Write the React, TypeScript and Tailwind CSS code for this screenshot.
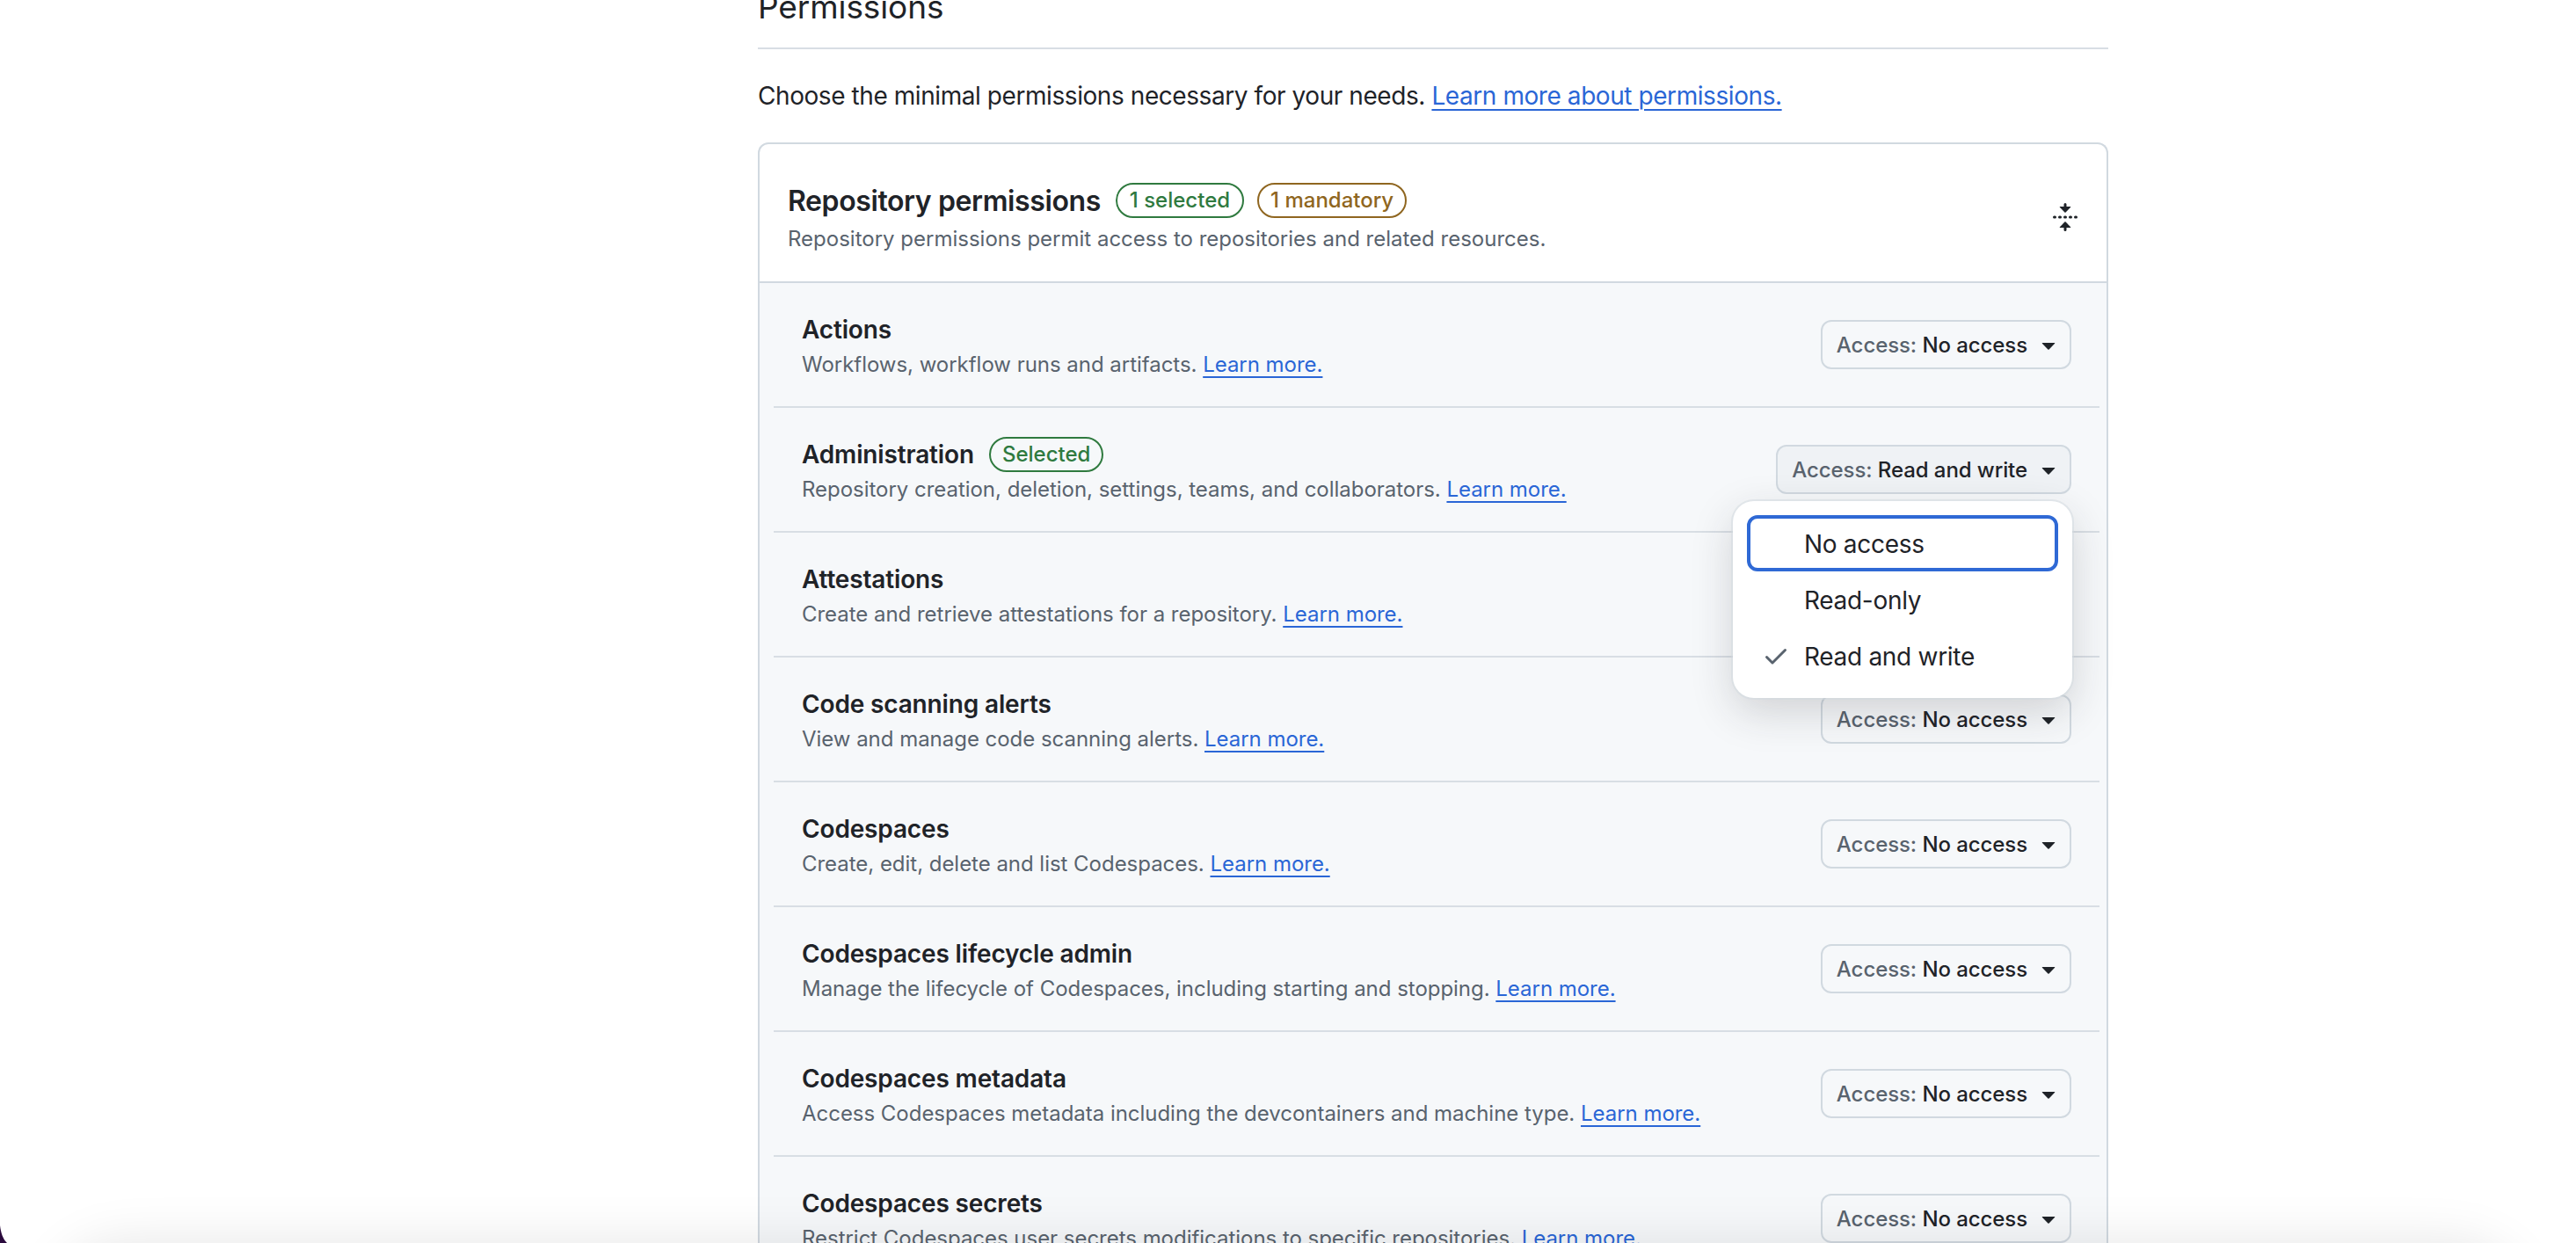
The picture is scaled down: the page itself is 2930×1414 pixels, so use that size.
import React from "react";

const rows = [
  { t: "Actions", d: "Workflows, workflow runs and artifacts." },
  { t: "Administration", d: "Repository creation, deletion, settings, teams, and collaborators.", sel: true, v: "Read and write" },
  { t: "Attestations", d: "Create and retrieve attestations for a repository." },
  { t: "Code scanning alerts", d: "View and manage code scanning alerts." },
  { t: "Codespaces", d: "Create, edit, delete and list Codespaces." },
  { t: "Codespaces lifecycle admin", d: "Manage the lifecycle of Codespaces, including starting and stopping." },
  { t: "Codespaces metadata", d: "Access Codespaces metadata including the devcontainers and machine type." },
  { t: "Codespaces secrets", d: "Restrict Codespaces user secrets modifications to specific repositories." },
];

function FoldIcon() {
  return (
    <svg width="32" height="32" viewBox="0 0 16 16" fill="currentColor" className="text-[#1f2328]">
      <path d="M10.896 2H8.75V.75a.75.75 0 0 0-1.5 0V2H5.104a.25.25 0 0 0-.177.427l2.896 2.896a.25.25 0 0 0 .354 0l2.896-2.896A.25.25 0 0 0 10.896 2ZM8.75 15.25a.75.75 0 0 1-1.5 0V14H5.104a.25.25 0 0 1-.177-.427l2.896-2.896a.25.25 0 0 1 .354 0l2.896 2.896a.25.25 0 0 1-.177.427H8.75v1.25Zm-6.5-6.5a.75.75 0 0 0 0-1.5h-.5a.75.75 0 0 0 0 1.5h.5ZM6 8a.75.75 0 0 1-.75.75h-.5a.75.75 0 0 1 0-1.5h.5A.75.75 0 0 1 6 8Zm2.25.75a.75.75 0 0 0 0-1.5h-.5a.75.75 0 0 0 0 1.5h.5ZM12 8a.75.75 0 0 1-.75.75h-.5a.75.75 0 0 1 0-1.5h.5A.75.75 0 0 1 12 8Zm2.25.75a.75.75 0 0 0 0-1.5h-.5a.75.75 0 0 0 0 1.5h.5Z" />
    </svg>
  );
}

function Caret() {
  return (
    <svg width="32" height="32" viewBox="0 0 16 16" fill="currentColor" className="ml-[8px] text-[#1f2328]">
      <path d="m4.427 7.427 3.396 3.396a.25.25 0 0 0 .354 0l3.396-3.396A.25.25 0 0 0 11.396 7H4.604a.25.25 0 0 0-.177.427Z" />
    </svg>
  );
}

function CheckIcon() {
  return (
    <svg width="32" height="32" viewBox="0 0 16 16" fill="currentColor">
      <path d="M13.78 4.22a.75.75 0 0 1 0 1.06l-7.25 7.25a.75.75 0 0 1-1.06 0L2.22 9.28a.751.751 0 0 1 .018-1.042.751.751 0 0 1 1.042-.018L6 10.94l6.72-6.72a.75.75 0 0 1 1.06 0Z" />
    </svg>
  );
}

function Link({ children }: { children: React.ReactNode }) {
  return (
    <a className="text-[#2a66d6] underline decoration-2 underline-offset-[5px]" href="#">
      {children}
    </a>
  );
}

function Menu() {
  const items = ["No access", "Read-only", "Read and write"];
  return (
    <div className="absolute right-[31px] top-[106px] z-10 w-[386px] rounded-[24px] bg-white p-[16px] shadow-[0_0_0_2px_rgba(209,217,224,0.5),0_16px_48px_rgba(37,41,46,0.18)]">
      {items.map((it, i) => (
        <div
          key={it}
          className={
            i === 0
              ? "flex h-[64px] items-center rounded-[12px] border-[4px] border-[#2f69d5] pl-[13px] text-[28px] tracking-[-0.3px] text-[#1f2328]"
              : "flex h-[64px] items-center rounded-[12px] border-[4px] border-transparent pl-[13px] text-[28px] tracking-[-0.3px] text-[#1f2328]"
          }
        >
          <span className="mr-[16px] flex w-[32px] justify-center text-[#59636e]">
            {i === 2 ? <CheckIcon /> : null}
          </span>
          <span className="pt-[2px]">{it}</span>
        </div>
      ))}
    </div>
  );
}

export default function App() {
  return (
    <div className="relative h-[1414px] w-[2930px] overflow-hidden bg-white font-['Inter',sans-serif] text-[#1f2328]">
      <div className="ml-[862px] w-[1536px]">
        <div className="mt-[-22px] h-[78px] border-b-2 border-[#d8dee4] text-[37px] leading-[60px] tracking-[-0.1px]">
          Permissions
        </div>
        <p className="mt-[33px] h-[42px] text-[28px] leading-[40px] tracking-[-0.43px]">
          Choose the minimal permissions necessary for your needs. <Link>Learn more about permissions.</Link>
        </p>
        <div className="mt-[31px] rounded-t-[12px] border-x-2 border-t-2 border-[#d1d9e0]">
          <div className="flex h-[158px] items-center justify-between border-b-2 border-[#d1d9e0] pl-[32px] pr-[31px] pt-[10px]">
            <div>
              <div className="flex items-center gap-[17px]">
                <h2 className="text-[32px] font-semibold leading-[48px] tracking-[-0.4px]">Repository permissions</h2>
                <div className="mt-[-2px] flex gap-[15px]">
                  <span className="flex h-[40px] items-center rounded-full border-2 border-[#2f7a3f] px-[14px] text-[24px] font-medium text-[#2f7a3f]">
                    1 selected
                  </span>
                  <span className="flex h-[40px] items-center rounded-full border-2 border-[#8f6620] px-[13px] text-[24px] font-medium text-[#8f6620]">
                    1 mandatory
                  </span>
                </div>
              </div>
              <p className="mt-[1px] text-[24px] leading-[36px] text-[#59636e]">
                Repository permissions permit access to repositories and related resources.
              </p>
            </div>
            <FoldIcon />
          </div>
          <div className="bg-[#f6f8fa] pb-[40px] pl-[16px] pr-[8px]">
            {rows.map((r) => (
              <div
                key={r.t}
                className="relative flex h-[142px] items-center justify-between border-b-2 border-[#d8dee4] px-[32px]"
              >
                <div className="mt-[3px]">
                  <div className="flex h-[40px] items-center gap-[17px]">
                    <span className="text-[28px] font-semibold leading-[40px] tracking-[-0.15px]">{r.t}</span>
                    {r.sel ? (
                      <span className="flex h-[40px] items-center rounded-full border-2 border-[#2f7a3f] px-[13px] text-[24px] font-medium text-[#2f7a3f]">
                        Selected
                      </span>
                    ) : null}
                  </div>
                  <p className="mt-[2px] text-[24px] leading-[36px] tracking-[-0.03px] text-[#59636e]">
                    {r.d} <Link>Learn more.</Link>
                  </p>
                </div>
                <div
                  className={
                    r.v
                      ? "flex h-[56px] items-center rounded-[12px] border-2 border-[#d1d9e0] bg-[#eff2f5] pl-[16px] pr-[8px] text-[24px] font-medium tracking-[-0.08px]"
                      : "flex h-[56px] items-center rounded-[12px] border-2 border-[#d1d9e0] bg-[#f6f8fa] pl-[16px] pr-[8px] text-[24px] font-medium tracking-[-0.08px]"
                  }
                >
                  <span className="pt-[2px] text-[#59636e]">Access:&nbsp;</span>
                  <span className="pt-[2px]">{r.v ?? "No access"}</span>
                  <Caret />
                </div>
                {r.sel ? <Menu /> : null}
              </div>
            ))}
          </div>
        </div>
      </div>
      <div className="pointer-events-none absolute left-[60px] right-[60px] top-[1414px] z-20 h-[100px] rounded-t-[80px] shadow-[0_0_60px_rgba(0,0,0,0.1)]" />
      <svg className="absolute bottom-0 left-0 z-30" width="8" height="20" viewBox="0 0 8 20">
        <path d="M0 0C1 8 3 15 8 20L0 20Z" fill="#2b0a3d" />
      </svg>
    </div>
  );
}
